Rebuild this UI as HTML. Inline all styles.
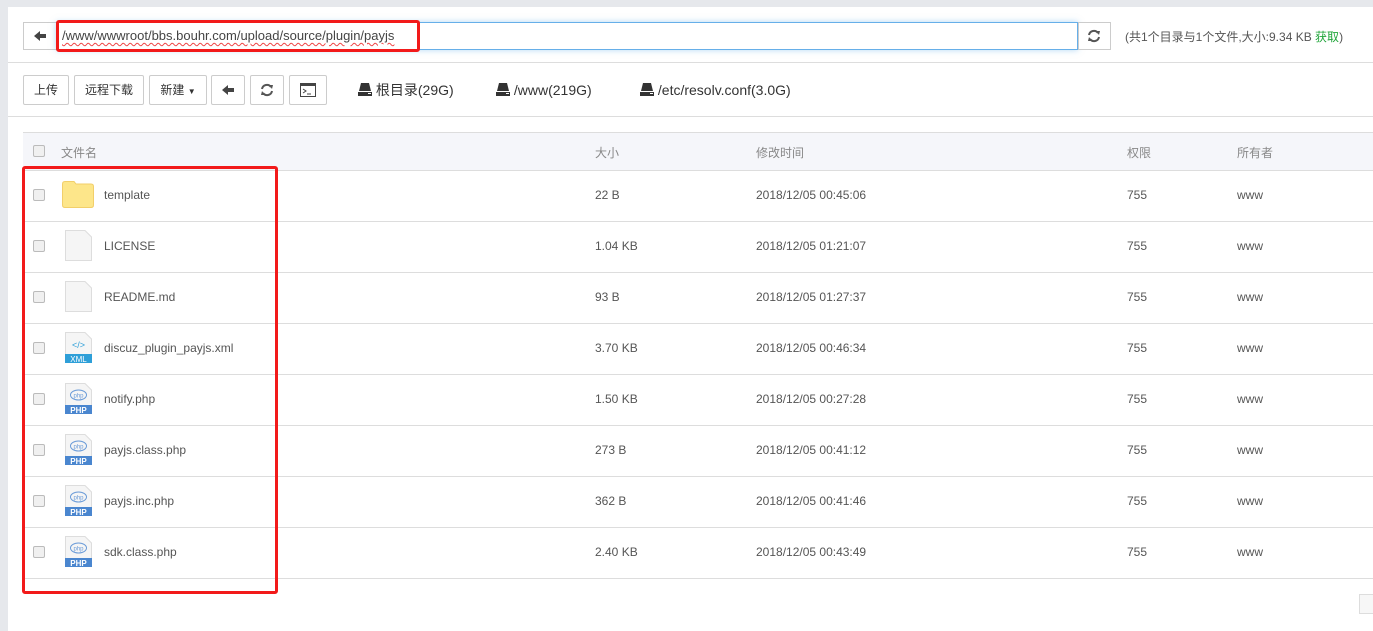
<!DOCTYPE html>
<html><head><meta charset="utf-8"><style>
*{margin:0;padding:0;box-sizing:border-box}
body{width:1373px;height:611px;background:#e6e8ec;font-family:"Liberation Sans","Noto Sans CJK SC",sans-serif;font-size:12px;color:#555;position:relative;overflow:hidden}
.panel{position:absolute;left:8px;top:7px;right:0;bottom:-20px;background:#fff}
.a{position:absolute}
.btn{position:absolute;top:75px;height:30px;border:1px solid #ccc;border-radius:2px;background:#fff;color:#333;font-size:12px;line-height:28px;text-align:center}
.hl{position:absolute;left:8px;right:0;height:1px;background:#ddd}
.row{position:absolute;left:23px;right:0;height:51px;border-bottom:1px solid #ddd}
.cb{position:absolute;left:10px;width:12px;height:12px;border:1px solid #bbb;border-radius:2px;background:#f0f0f0}
.c{position:absolute;top:0;line-height:48px;font-size:12px;color:#555}
.red{position:absolute;border:3px solid #f21a1a;border-radius:3px}
</style></head><body>
<div class="panel"></div>
<div class="a" style="left:23px;top:22px;width:33px;height:28px;border:1px solid #ccc;border-right:none;background:#fff"></div>
<svg class="a" style="left:33px;top:30px" width="14" height="12"><path d="M1 6 L7 1 V4 H13 V8 H7 V11 Z" fill="#444"/></svg>
<div class="a" style="left:56px;top:22px;width:1022px;height:28px;border:1px solid #66afe9;box-shadow:0 0 6px rgba(102,175,233,.5);background:#fff"></div>
<div class="a" style="left:62px;top:28px;font-size:13px;color:#444;text-decoration:underline wavy #e44;text-decoration-thickness:1px;text-underline-offset:2px">/www/wwwroot/bbs.bouhr.com/upload/source/plugin/payjs</div>
<div class="a" style="left:1078px;top:22px;width:33px;height:28px;border:1px solid #ccc;background:#fff"></div>
<svg class="a" style="left:1087px;top:29px" width="14" height="14" viewBox="0 0 14 14"><path d="M2 6 A5 5 0 0 1 11 4 M12 8 A5 5 0 0 1 3 10" stroke="#555" stroke-width="2" fill="none"/><path d="M9 2 L13 2 L12 6Z M5 12 L1 12 L2 8Z" fill="#555"/></svg>
<div class="a" style="left:1125px;top:28px;font-size:12px;color:#555">(共1个目录与1个文件,大小:9.34 KB <span style="color:#20a53a">获取</span>)</div>
<div class="red" style="left:56px;top:20px;width:364px;height:32px"></div>
<div class="hl" style="top:62px"></div>
<div class="btn" style="left:23px;width:46px">上传</div>
<div class="btn" style="left:74px;width:70px">远程下载</div>
<div class="btn" style="left:149px;width:58px">新建 <span style="font-size:8px">▼</span></div>
<div class="btn" style="left:211px;width:34px"><svg width="14" height="12" style="margin-top:8px"><path d="M1 6 L7 1 V4 H13 V8 H7 V11 Z" fill="#444"/></svg></div>
<div class="btn" style="left:250px;width:34px"><svg width="14" height="14" viewBox="0 0 14 14" style="margin-top:7px"><path d="M2 6 A5 5 0 0 1 11 4 M12 8 A5 5 0 0 1 3 10" stroke="#555" stroke-width="2" fill="none"/><path d="M9 2 L13 2 L12 6Z M5 12 L1 12 L2 8Z" fill="#555"/></svg></div>
<div class="btn" style="left:289px;width:38px"><svg width="16" height="14" style="margin-top:7px"><rect x="0.5" y="0.5" width="15" height="13" fill="none" stroke="#444"/><rect x="1" y="1" width="14" height="2" fill="#444"/><path d="M3 6 L6 8 L3 10 M7 11 H11" stroke="#444" fill="none"/></svg></div>
<div class="a" style="left:358px;top:80px;font-size:14px;color:#333;line-height:20px"><svg width="14" height="13" style="vertical-align:-1px"><path d="M3 0 H11 L13 8 H1Z" fill="#333"/><rect x="0" y="9" width="14" height="4" fill="#333"/><rect x="10" y="10" width="3" height="1" fill="#fff"/></svg> 根目录(29G)</div>
<div class="a" style="left:496px;top:80px;font-size:14px;color:#333;line-height:20px"><svg width="14" height="13" style="vertical-align:-1px"><path d="M3 0 H11 L13 8 H1Z" fill="#333"/><rect x="0" y="9" width="14" height="4" fill="#333"/><rect x="10" y="10" width="3" height="1" fill="#fff"/></svg> /www(219G)</div>
<div class="a" style="left:640px;top:80px;font-size:14px;color:#333;line-height:20px"><svg width="14" height="13" style="vertical-align:-1px"><path d="M3 0 H11 L13 8 H1Z" fill="#333"/><rect x="0" y="9" width="14" height="4" fill="#333"/><rect x="10" y="10" width="3" height="1" fill="#fff"/></svg> /etc/resolv.conf(3.0G)</div>
<div class="hl" style="top:116px"></div>
<div class="a" style="left:23px;top:132px;right:0;height:39px;background:#f5f6fa;border-top:1px solid #ddd;border-bottom:1px solid #ddd">
<div class="cb" style="top:12px"></div>
<div class="c" style="left:38px;line-height:41px;color:#888">文件名</div>
<div class="c" style="left:572px;line-height:41px;color:#888">大小</div>
<div class="c" style="left:733px;line-height:41px;color:#888">修改时间</div>
<div class="c" style="left:1104px;line-height:41px;color:#888">权限</div>
<div class="c" style="left:1214px;line-height:41px;color:#888">所有者</div>
</div>
<div class="row" style="top:171px"><div class="cb" style="top:18px"></div>
<svg class="a" style="left:39px;top:10px" width="32" height="27"><path d="M0.5 3 Q0.5 0.5 3 0.5 H12 L14 3 H29 Q31.5 3 31.5 5.5 V24 Q31.5 26.5 29 26.5 H3 Q0.5 26.5 0.5 24Z" fill="#fde68a" stroke="#f2cf6a"/></svg>
<div class="c" style="left:81px">template</div><div class="c" style="left:572px">22 B</div><div class="c" style="left:733px">2018/12/05 00:45:06</div><div class="c" style="left:1104px">755</div><div class="c" style="left:1214px">www</div></div>
<div class="row" style="top:222px"><div class="cb" style="top:18px"></div>
<svg class="a" style="left:42px;top:8px" width="27" height="31"><path d="M0.5 0.5 H20 L26.5 7 V30.5 H0.5Z" fill="#f5f5f5" stroke="#ddd"/></svg>
<div class="c" style="left:81px">LICENSE</div><div class="c" style="left:572px">1.04 KB</div><div class="c" style="left:733px">2018/12/05 01:21:07</div><div class="c" style="left:1104px">755</div><div class="c" style="left:1214px">www</div></div>
<div class="row" style="top:273px"><div class="cb" style="top:18px"></div>
<svg class="a" style="left:42px;top:8px" width="27" height="31"><path d="M0.5 0.5 H20 L26.5 7 V30.5 H0.5Z" fill="#f5f5f5" stroke="#ddd"/></svg>
<div class="c" style="left:81px">README.md</div><div class="c" style="left:572px">93 B</div><div class="c" style="left:733px">2018/12/05 01:27:37</div><div class="c" style="left:1104px">755</div><div class="c" style="left:1214px">www</div></div>
<div class="row" style="top:324px"><div class="cb" style="top:18px"></div>
<svg class="a" style="left:42px;top:8px" width="27" height="31"><path d="M0.5 0.5 H20 L26.5 7 V30.5 H0.5Z" fill="#f5f5f5" stroke="#ddd"/><rect x="0" y="22" width="27" height="9" fill="#2e9fd8"/><text x="13.5" y="16" font-size="9" fill="#2e9fd8" text-anchor="middle" font-family="Liberation Sans">&lt;/&gt;</text><text x="13.5" y="30" font-size="8" fill="#fff" text-anchor="middle" font-family="Liberation Sans">XML</text></svg>
<div class="c" style="left:81px">discuz_plugin_payjs.xml</div><div class="c" style="left:572px">3.70 KB</div><div class="c" style="left:733px">2018/12/05 00:46:34</div><div class="c" style="left:1104px">755</div><div class="c" style="left:1214px">www</div></div>
<div class="row" style="top:375px"><div class="cb" style="top:18px"></div>
<svg class="a" style="left:42px;top:8px" width="27" height="31"><path d="M0.5 0.5 H20 L26.5 7 V30.5 H0.5Z" fill="#f5f5f5" stroke="#ddd"/><ellipse cx="13.5" cy="12" rx="8" ry="5" fill="none" stroke="#6a9bd8"/><text x="13.5" y="14.5" font-size="6" fill="#6a9bd8" text-anchor="middle" font-family="Liberation Sans">php</text><rect x="0" y="22" width="27" height="9" fill="#4a86cf"/><text x="13.5" y="30" font-size="8" fill="#fff" text-anchor="middle" font-family="Liberation Sans" font-weight="bold">PHP</text></svg>
<div class="c" style="left:81px">notify.php</div><div class="c" style="left:572px">1.50 KB</div><div class="c" style="left:733px">2018/12/05 00:27:28</div><div class="c" style="left:1104px">755</div><div class="c" style="left:1214px">www</div></div>
<div class="row" style="top:426px"><div class="cb" style="top:18px"></div>
<svg class="a" style="left:42px;top:8px" width="27" height="31"><path d="M0.5 0.5 H20 L26.5 7 V30.5 H0.5Z" fill="#f5f5f5" stroke="#ddd"/><ellipse cx="13.5" cy="12" rx="8" ry="5" fill="none" stroke="#6a9bd8"/><text x="13.5" y="14.5" font-size="6" fill="#6a9bd8" text-anchor="middle" font-family="Liberation Sans">php</text><rect x="0" y="22" width="27" height="9" fill="#4a86cf"/><text x="13.5" y="30" font-size="8" fill="#fff" text-anchor="middle" font-family="Liberation Sans" font-weight="bold">PHP</text></svg>
<div class="c" style="left:81px">payjs.class.php</div><div class="c" style="left:572px">273 B</div><div class="c" style="left:733px">2018/12/05 00:41:12</div><div class="c" style="left:1104px">755</div><div class="c" style="left:1214px">www</div></div>
<div class="row" style="top:477px"><div class="cb" style="top:18px"></div>
<svg class="a" style="left:42px;top:8px" width="27" height="31"><path d="M0.5 0.5 H20 L26.5 7 V30.5 H0.5Z" fill="#f5f5f5" stroke="#ddd"/><ellipse cx="13.5" cy="12" rx="8" ry="5" fill="none" stroke="#6a9bd8"/><text x="13.5" y="14.5" font-size="6" fill="#6a9bd8" text-anchor="middle" font-family="Liberation Sans">php</text><rect x="0" y="22" width="27" height="9" fill="#4a86cf"/><text x="13.5" y="30" font-size="8" fill="#fff" text-anchor="middle" font-family="Liberation Sans" font-weight="bold">PHP</text></svg>
<div class="c" style="left:81px">payjs.inc.php</div><div class="c" style="left:572px">362 B</div><div class="c" style="left:733px">2018/12/05 00:41:46</div><div class="c" style="left:1104px">755</div><div class="c" style="left:1214px">www</div></div>
<div class="row" style="top:528px"><div class="cb" style="top:18px"></div>
<svg class="a" style="left:42px;top:8px" width="27" height="31"><path d="M0.5 0.5 H20 L26.5 7 V30.5 H0.5Z" fill="#f5f5f5" stroke="#ddd"/><ellipse cx="13.5" cy="12" rx="8" ry="5" fill="none" stroke="#6a9bd8"/><text x="13.5" y="14.5" font-size="6" fill="#6a9bd8" text-anchor="middle" font-family="Liberation Sans">php</text><rect x="0" y="22" width="27" height="9" fill="#4a86cf"/><text x="13.5" y="30" font-size="8" fill="#fff" text-anchor="middle" font-family="Liberation Sans" font-weight="bold">PHP</text></svg>
<div class="c" style="left:81px">sdk.class.php</div><div class="c" style="left:572px">2.40 KB</div><div class="c" style="left:733px">2018/12/05 00:43:49</div><div class="c" style="left:1104px">755</div><div class="c" style="left:1214px">www</div></div>
<div class="red" style="left:22px;top:166px;width:256px;height:428px"></div>
<div class="a" style="left:1359px;top:594px;width:20px;height:20px;border:1px solid #ddd;background:#f7f7f7"></div>
</body></html>
